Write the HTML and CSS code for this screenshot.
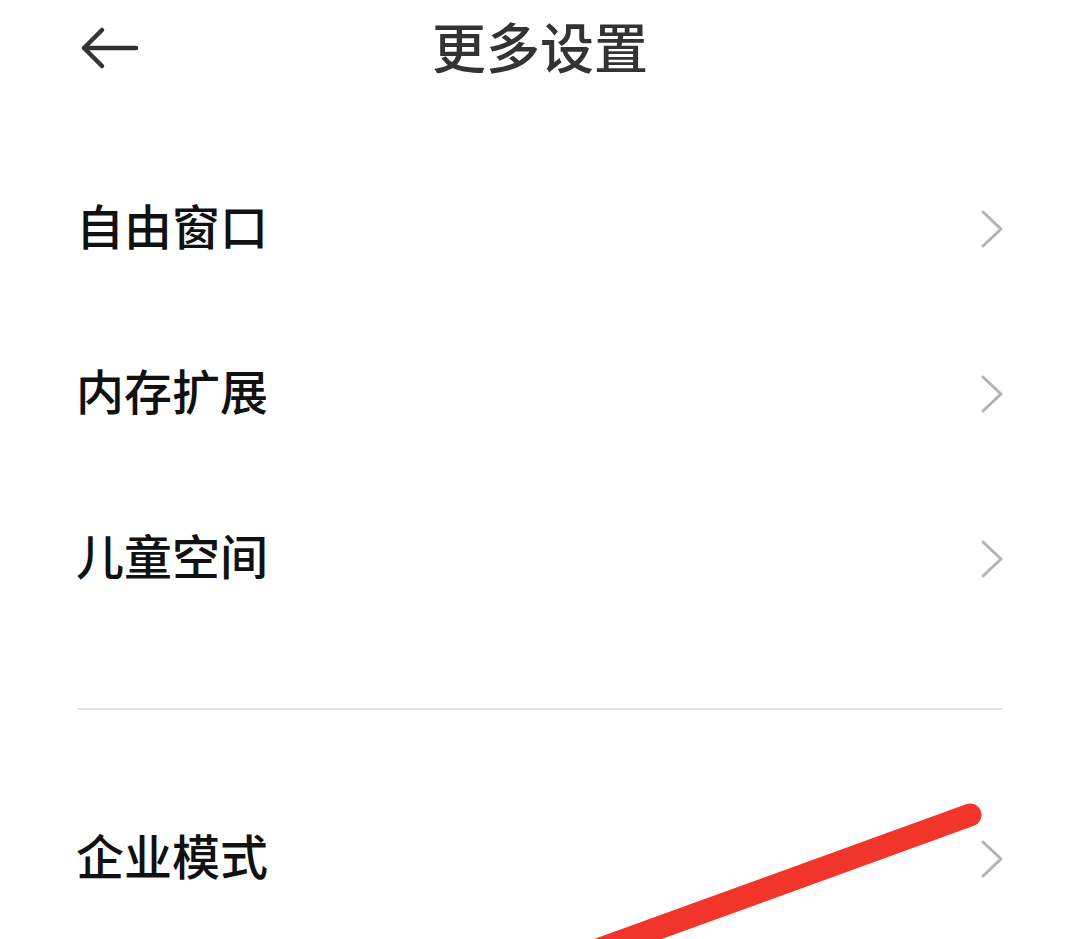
FILE: index.html
```html
<!DOCTYPE html>
<html lang="zh-CN">
<head>
<meta charset="utf-8">
<title>更多设置</title>
<link rel="stylesheet" href="styles.css">
</head>
<body>
<div class="page">
  <header class="header">
    <svg class="back" width="60" height="44" viewBox="0 0 60 44">
      <path d="M4 22 H56 M22 4 L4 22 L22 40" fill="none" stroke="#333" stroke-width="4.5" stroke-linecap="round" stroke-linejoin="round"/>
    </svg>
    <h1 class="title">更多设置</h1>
  </header>
  <ul class="list">
    <li class="row"><span class="label">自由窗口</span><svg class="chev" width="24" height="40" viewBox="0 0 24 40"><path d="M3 3 L21 20 L3 37" fill="none" stroke="#b3b3b3" stroke-width="3" stroke-linecap="round" stroke-linejoin="round"/></svg></li>
    <li class="row"><span class="label">内存扩展</span><svg class="chev" width="24" height="40" viewBox="0 0 24 40"><path d="M3 3 L21 20 L3 37" fill="none" stroke="#b3b3b3" stroke-width="3" stroke-linecap="round" stroke-linejoin="round"/></svg></li>
    <li class="row"><span class="label">儿童空间</span><svg class="chev" width="24" height="40" viewBox="0 0 24 40"><path d="M3 3 L21 20 L3 37" fill="none" stroke="#b3b3b3" stroke-width="3" stroke-linecap="round" stroke-linejoin="round"/></svg></li>
  </ul>
  <div class="divider"></div>
  <ul class="list second">
    <li class="row"><span class="label">企业模式</span><svg class="chev" width="24" height="40" viewBox="0 0 24 40"><path d="M3 3 L21 20 L3 37" fill="none" stroke="#b3b3b3" stroke-width="3" stroke-linecap="round" stroke-linejoin="round"/></svg></li>
  </ul>
  <svg class="mark" width="1080" height="939" viewBox="0 0 1080 939">
    <line x1="970" y1="815" x2="570" y2="960" stroke="#f2352a" stroke-width="23" stroke-linecap="round"/>
  </svg>
</div>
</body>
</html>
```

FILE: styles.css
```css
* { box-sizing: border-box; }
html, body {
  margin: 0;
  padding: 0;
  background: #ffffff;
}
body {
  font-family: "Noto Sans CJK SC", "Noto Sans", sans-serif;
  width: 1080px;
  height: 939px;
  overflow: hidden;
}
.page {
  position: relative;
  width: 1080px;
  height: 939px;
}
.header {
  position: relative;
  height: 96px;
  display: flex;
  align-items: center;
  justify-content: center;
}
.back {
  position: absolute;
  left: 80px;
  top: 26px;
}
.title {
  margin: 0;
  padding-bottom: 4px;
  font-size: 54px;
  font-weight: 500;
  color: #333333;
  line-height: 1;
}
.list {
  list-style: none;
  margin: 50px 0 0 0;
  padding: 0 76px 0 76px;
}
.list.second {
  margin-top: 66px;
}
.row {
  height: 165px;
  display: flex;
  align-items: center;
  justify-content: space-between;
}
.label {
  padding-bottom: 10px;
  font-size: 48px;
  font-weight: 500;
  color: #111111;
  line-height: 1;
}
.chev {
  margin-right: 0;
}
.divider {
  margin: 67px 77px 0 77px;
  height: 2px;
  background: #e3e3e3;
}
.mark {
  position: absolute;
  left: 0;
  top: 0;
  pointer-events: none;
}
```
